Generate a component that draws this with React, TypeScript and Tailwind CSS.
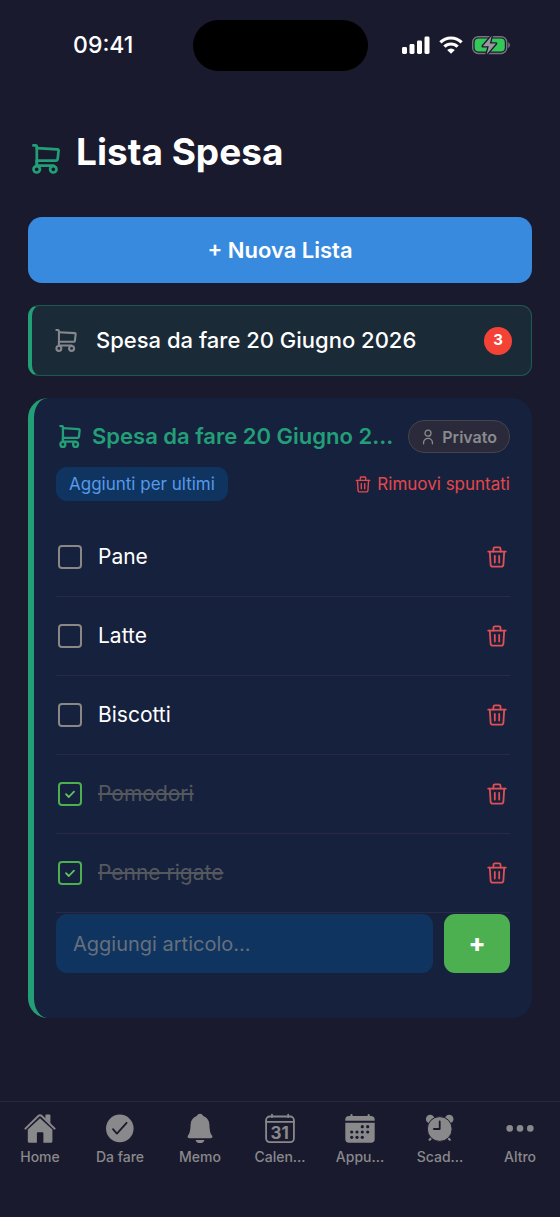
import { useState } from "react";
import type { FormEvent, ReactNode } from "react";

interface Item {
  id: number;
  name: string;
  done: boolean;
}

const START: Item[] = [
  { id: 1, name: "Pane", done: false },
  { id: 2, name: "Latte", done: false },
  { id: 3, name: "Biscotti", done: false },
  { id: 4, name: "Pomodori", done: true },
  { id: 5, name: "Penne rigate", done: true },
];

function Cart({ className, stroke = 2.7 }: { className: string; stroke?: number }) {
  return (
    <svg aria-hidden viewBox="0 0 28 30" className={className} fill="none" stroke="currentColor" strokeWidth={stroke} strokeLinecap="round" strokeLinejoin="round">
      <path d="M1.4 1.4H3.4Q4.8 1.4 4.8 2.8V21.6" />
      <path d="M4.8 4.2 25.6 5.4Q26.7 5.5 26.6 6.6L25.6 15.4Q25.4 16.7 24.2 16.7H4.8" />
      <path d="M4.8 16.7V21.6H21.4" />
      <circle cx="4.7" cy="25.3" r="3.2" />
      <circle cx="21.3" cy="25.3" r="3.2" />
    </svg>
  );
}

function Trash({ className }: { className: string }) {
  return (
    <svg aria-hidden viewBox="0 0 20 22" className={className} fill="none" stroke="currentColor" strokeWidth="1.8" strokeLinecap="round" strokeLinejoin="round">
      <path d="M1.2 5.6H18.8" />
      <path d="M6.3 5.6 6.6 2.2Q6.7 1.3 7.6 1.3H12.4Q13.3 1.3 13.4 2.2L13.7 5.6" />
      <path d="M2.8 5.6 3.6 18.6Q3.8 20.6 5.6 20.6H14.4Q16.2 20.6 16.4 18.6L17.2 5.6" />
      <path d="M7.8 9.8V16.6M12.2 9.8V16.6" />
    </svg>
  );
}

function StatusBar() {
  return (
    <div className="grid h-[90px] grid-cols-[1fr_175px_1fr] items-center">
      <time className="pl-[14px] text-center text-[23px] font-medium">09:41</time>
      <div className="h-[51px] rounded-full bg-black" />
      <div className="flex items-center gap-[9px] pl-[34px]">
        <svg aria-hidden viewBox="0 0 28 18" className="h-[18px] w-[28px]" fill="#fff">
          <rect x="0" y="11" width="5" height="7" rx="1.4" />
          <rect x="7.5" y="8" width="5" height="10" rx="1.4" />
          <rect x="15" y="4.5" width="5" height="13.5" rx="1.4" />
          <rect x="22.5" y="0.5" width="5" height="17.5" rx="1.4" />
        </svg>
        <svg aria-hidden viewBox="0 0 24 18" className="h-[18px] w-[24px]" fill="none" stroke="#fff" strokeWidth="3.2">
          <path d="M1.4 6.4A15 15 0 0 1 22.6 6.4" />
          <path d="M5.4 10.7A9.4 9.4 0 0 1 18.6 10.7" />
          <path d="M12 17.8 8.2 14A5.4 5.4 0 0 1 15.8 14Z" fill="#fff" stroke="none" />
        </svg>
        <svg aria-hidden viewBox="0 0 38 20" className="h-[20px] w-[38px]">
          <rect x="0.7" y="1.7" width="34" height="16.8" rx="5.6" fill="none" stroke="#77747f" strokeWidth="1.4" />
          <path d="M36.2 7.2Q38 8 38 10.1T36.2 13Z" fill="#77747f" />
          <rect x="2.6" y="3.6" width="30.2" height="13" rx="4" fill="#34c759" />
          <path d="M19.8 0.8 10.8 11.2H16.8L14.6 19.4 24 8.6H17.8Z" fill="#9b979f" stroke="#1a1a2e" strokeWidth="2.6" strokeLinejoin="round" paintOrder="stroke" />
        </svg>
      </div>
    </div>
  );
}

function TabIcon({ children }: { children: ReactNode }) {
  return (
    <svg aria-hidden viewBox="0 0 32 32" className="h-8 w-8" fill="currentColor" stroke="none">
      {children}
    </svg>
  );
}

const TABS: { label: string; icon: ReactNode }[] = [
  {
    label: "Home",
    icon: (
      <>
        <path d="M21.4 2.6Q21.4 1.6 22.4 1.6H25.4Q26.4 1.6 26.4 2.6V10.4L21.4 6Z" />
        <path d="M1.4 15.6 14.6 2.8Q16 1.6 17.4 2.8L30.6 15.6" fill="none" stroke="currentColor" strokeWidth="2" strokeLinecap="round" />
        <path d="M3.8 16.6 16 5.2 28.4 16.6V28.2Q28.4 29.8 26.8 29.8H19.4V20.2Q19.4 19.2 18.4 19.2H13.9Q12.9 19.2 12.9 20.2V29.8H5.4Q3.8 29.8 3.8 28.2Z" />
      </>
    ),
  },
  {
    label: "Da fare",
    icon: (
      <>
        <circle cx="15.8" cy="15.4" r="13.8" />
        <path d="M9 16.2 12.9 20.6 22.6 9.8" fill="none" stroke="#1a1a2e" strokeWidth="1.8" strokeLinecap="round" strokeLinejoin="round" />
      </>
    ),
  },
  {
    label: "Memo",
    icon: (
      <>
        <path d="M16 0.8C17.7 0.8 18.9 1.8 19.2 3.1C23 4.4 25.2 7.4 25.4 11.4C25.6 16.8 26 19.6 28 22.6C28.9 24.2 28.2 25.3 26.6 25.3H5.4C3.8 25.3 3.1 24.2 4 22.6C6 19.6 6.4 16.8 6.6 11.4C6.8 7.4 9 4.4 12.8 3.1C13.1 1.8 14.3 0.8 16 0.8Z" />
        <path d="M11.6 26.9H20.4C19.8 29 18.2 30.1 16 30.1S12.2 29 11.6 26.9Z" />
      </>
    ),
  },
  {
    label: "Calen...",
    icon: (
      <>
        <rect x="2.1" y="3.5" width="27.8" height="25.6" rx="3.6" fill="none" stroke="currentColor" strokeWidth="1.8" />
        <path d="M2 8.8H30M8 1.6V4M24.2 1.6V4" fill="none" stroke="currentColor" strokeWidth="1.8" strokeLinecap="round" />
        <text x="15.6" y="25.6" textAnchor="middle" fontSize="17" fontWeight="700">31</text>
      </>
    ),
  },
  {
    label: "Appu...",
    icon: (
      <>
        <path d="M1.3 7.8V6.6Q1.3 3 5 3H6.4V1.8Q7.5 .4 8.6 1.8V3H23.6V1.8Q24.7 .4 25.8 1.8V3H27Q30.7 3 30.7 6.6V7.8Z" />
        <path d="M1.3 9.7H30.7V26Q30.7 29.8 27 29.8H5Q1.3 29.8 1.3 26Z" />
        <g fill="#1a1a2e">
          {[[18.3, 13.7], [23.7, 13.7], [7.7, 19], [13, 19], [18.3, 19], [23.7, 19], [7.7, 24.3], [13, 24.3], [18.3, 24.3]].map(([x, y]) => (
            <circle key={`${x}-${y}`} cx={x} cy={y} r="1.6" />
          ))}
        </g>
      </>
    ),
  },
  {
    label: "Scad...",
    icon: (
      <>
        <circle cx="6.2" cy="6" r="4.3" />
        <circle cx="25.2" cy="6" r="4.3" />
        <path d="M5.6 26.8 9 23.4M25.8 26.8 22.4 23.4" stroke="currentColor" strokeWidth="2.2" strokeLinecap="round" />
        <circle cx="15.7" cy="16" r="12.4" stroke="#1a1a2e" strokeWidth="1" />
        <path d="M15.7 8.4V16H9.9" fill="none" stroke="#1a1a2e" strokeWidth="1.8" strokeLinecap="round" strokeLinejoin="round" />
      </>
    ),
  },
  {
    label: "Altro",
    icon: (
      <>
        <circle cx="5.7" cy="15.4" r="3.3" />
        <circle cx="16" cy="15.4" r="3.3" />
        <circle cx="26.3" cy="15.4" r="3.3" />
      </>
    ),
  },
];

export default function App() {
  const [items, setItems] = useState<Item[]>(START);
  const [draft, setDraft] = useState("");

  const left = items.filter((x) => !x.done).length;
  const toggle = (id: number) => setItems((a) => a.map((x) => (x.id === id ? { ...x, done: !x.done } : x)));
  const remove = (id: number) => setItems((a) => a.filter((x) => x.id !== id));
  const clearDone = () => setItems((a) => a.filter((x) => !x.done));
  const add = (e: FormEvent) => {
    e.preventDefault();
    if (!draft.trim()) return;
    setItems((a) => [...a, { id: Date.now(), name: draft.trim(), done: false }]);
    setDraft("");
  };

  return (
    <div className="flex min-h-screen flex-col bg-[#1a1a2e] font-['Inter',sans-serif] text-white">
      <StatusBar />

      <main className="flex flex-1 flex-col gap-[22px] px-7 pb-10">
        <header className="flex items-end gap-4 pt-10 pb-[21px] pl-1">
          <Cart className="h-[30px] w-[28px] text-[#239f78]" />
          <h1 className="text-[37px] leading-[44px] font-bold">Lista Spesa</h1>
        </header>

        <button className="h-[66px] rounded-[14px] bg-[#388adf] text-[22px] font-semibold">+ Nuova Lista</button>

        <button className="flex h-[71px] items-center rounded-[11px] border border-l-4 border-[#20584f] border-l-[#239f78] bg-[#1b2a37] pr-[19px] pl-[23px] text-left">
          <Cart className="h-[23px] w-[22px] text-[#85888f]" />
          <span className="ml-[19px] flex-1 truncate text-[22px] font-medium">Spesa da fare 20 Giugno 2026</span>
          <span className="grid h-7 w-7 place-items-center rounded-full bg-[#f44336] text-[15px] font-bold">{left}</span>
        </button>

        <section className="rounded-[20px] border-l-[6px] border-[#239f78] bg-[#16213e] px-[22px] pt-[22px] pb-[45px]">
          <div className="flex h-[33px] items-center pl-[3px]">
            <Cart className="h-[23px] w-[22px] text-[#239f78]" stroke={3} />
            <h2 className="ml-[11px] flex-1 text-[22px] font-semibold whitespace-nowrap text-[#239f78]">Spesa da fare 20 Giugno 2...</h2>
            <span className="flex h-[33px] items-center gap-[7px] rounded-2xl border border-[#44444c] bg-[#2a2a3a] px-3 text-base font-semibold text-[#8a8a8e]">
              <svg aria-hidden viewBox="0 0 14 16" className="h-4 w-[14px]" fill="none" stroke="currentColor" strokeWidth="1.3" strokeLinecap="round">
                <circle cx="7" cy="4.2" r="3" />
                <path d="M2.6 14.8V13.6A4.4 4.2 0 0 1 11.4 13.6V14.8" />
              </svg>
              Privato
            </span>
          </div>

          <div className="mt-[14px] flex items-center justify-between">
            <button className="h-[34px] rounded-[11px] bg-[#0f3460] px-[13px] pt-px text-[17px] text-[#559ae8]">Aggiunti per ultimi</button>
            <button onClick={clearDone} className="flex h-[34px] items-center gap-[6px] pt-px text-[17px] text-[#e5484a]">
              <Trash className="h-[17px] w-[16px]" />
              Rimuovi spuntati
            </button>
          </div>

          <ul className="mt-[17px] mb-px">
            {items.map((item) => (
              <li key={item.id} className="flex h-[79px] items-center border-b border-[#2a2a46]">
                <label className="flex flex-1 items-center gap-4 pl-[2px]">
                  <span className="relative h-6 w-6">
                    <input type="checkbox" checked={item.done} onChange={() => toggle(item.id)} className="peer block h-6 w-6 appearance-none rounded-[4px] border-2 border-[#8a8784] checked:border-[#4caf50]" />
                    <svg aria-hidden viewBox="0 0 24 24" className="pointer-events-none absolute inset-0 hidden text-[#5fc463] peer-checked:block" fill="none" stroke="currentColor" strokeWidth="1.8" strokeLinecap="round" strokeLinejoin="round">
                      <path d="M8 12.2 10.8 15 16 9.6" />
                    </svg>
                  </span>
                  <span className={item.done ? "text-[21px] text-[#55585d] line-through" : "text-[21px]"}>{item.name}</span>
                </label>
                <button onClick={() => remove(item.id)} aria-label={`Elimina ${item.name}`} className="mr-[3px] text-[#e05055]">
                  <Trash className="h-[22px] w-5" />
                </button>
              </li>
            ))}
          </ul>

          <form onSubmit={add} className="flex gap-[11px]">
            <input value={draft} onChange={(e) => setDraft(e.target.value)} aria-label="Aggiungi articolo" placeholder="Aggiungi articolo..." className="h-[59px] min-w-0 flex-1 rounded-[11px] bg-[#0f3460] px-[17px] text-[20px] outline-none placeholder:text-[#66707c]" />
            <button aria-label="Aggiungi" className="grid h-[59px] w-[66px] place-items-center rounded-[11px] bg-[#4caf50] text-[25px] font-extrabold">+</button>
          </form>
        </section>
      </main>

      <nav className="grid h-[116px] grid-cols-7 border-t border-[#27273c] text-[#89898b]">
        {TABS.map((tab) => (
          <a key={tab.label} href="#" className="flex flex-col items-center gap-[2px] pt-[11px]">
            <TabIcon>{tab.icon}</TabIcon>
            <span className="text-[14px] leading-5 font-medium">{tab.label}</span>
          </a>
        ))}
      </nav>
    </div>
  );
}
